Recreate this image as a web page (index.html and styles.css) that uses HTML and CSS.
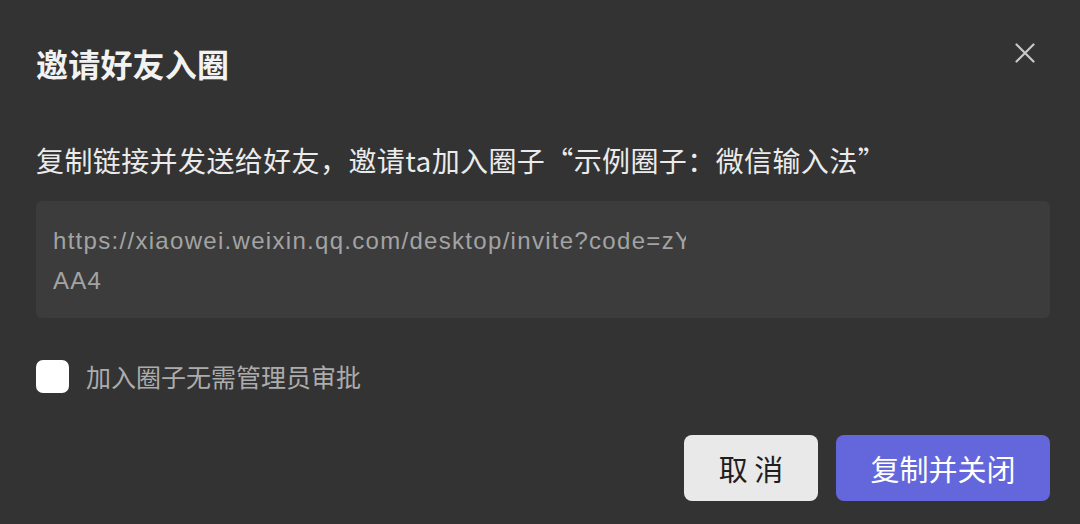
FILE: index.html
```html
<!DOCTYPE html>
<html lang="zh-CN">
<head>
<meta charset="utf-8">
<title>邀请好友入圈</title>
<link rel="stylesheet" href="styles.css">
</head>
<body>
<div class="dialog">
  <div class="header">
    <h1 class="title">邀请好友入圈</h1>
    <button class="close" aria-label="关闭">
      <svg width="20" height="20" viewBox="0 0 20 20"><path d="M1.5 1.5 L18.5 18.5 M18.5 1.5 L1.5 18.5" stroke="#c8c8c8" stroke-width="2.2" stroke-linecap="round" fill="none"/></svg>
    </button>
  </div>
  <p class="desc">复制链接并发送给好友，邀请ta加入圈子“示例圈子：微信输入法”</p>
  <div class="linkbox">
    <div class="line"><span class="clip">https://xiaowei.weixin.qq.com/desktop/invite?code=zY</span></div>
    <div class="line">AA4</div>
  </div>
  <label class="check-row">
    <span class="checkbox"></span>
    <span class="check-label">加入圈子无需管理员审批</span>
  </label>
  <div class="actions">
    <button class="btn btn-cancel">取 消</button>
    <button class="btn btn-primary">复制并关闭</button>
  </div>
</div>
</body>
</html>
```

FILE: styles.css
```css
* { box-sizing: border-box; }
html, body {
  margin: 0;
  padding: 0;
  background: #333333;
  width: 1080px;
  height: 524px;
  overflow: hidden;
}
body {
  font-family: "Noto Sans CJK SC", "Noto Sans", sans-serif;
}
.dialog {
  padding: 40px 30px 0 36px;
  display: flex;
  flex-direction: column;
}
.header {
  display: flex;
  justify-content: space-between;
  align-items: flex-start;
  height: 46px;
}
.title {
  margin: 0;
  font-size: 32px;
  line-height: 46px;
  font-weight: 700;
  color: #f2f2f2;
  letter-spacing: 0.2px;
}
.close {
  background: none;
  border: none;
  padding: 0;
  margin: 3px 15px 0 0;
  width: 20px;
  height: 20px;
  display: flex;
  cursor: pointer;
}
.desc {
  margin: 54px 0 0 0;
  font-size: 28px;
  line-height: 40px;
  color: #ebebeb;
  letter-spacing: 0.4px;
}
.linkbox {
  margin-top: 21px;
  background: #3c3c3c;
  border-radius: 6px;
  padding: 20px 17px 17px 17px;
  font-family: "Liberation Sans", "Noto Sans", sans-serif;
  font-size: 24px;
  line-height: 40px;
  color: #a3a3a3;
  letter-spacing: 1.3px;
}
.line {
  height: 40px;
  white-space: nowrap;
}
.clip {
  display: inline-block;
  max-width: 633px;
  overflow: hidden;
  vertical-align: top;
}
.check-row {
  margin-top: 42px;
  display: flex;
  align-items: center;
  gap: 17px;
  height: 33px;
}
.checkbox {
  width: 33px;
  height: 33px;
  background: #ffffff;
  border-radius: 7px;
  flex: none;
}
.check-label {
  font-size: 25px;
  line-height: 33px;
  color: #acacac;
}
.actions {
  margin-top: 42px;
  display: flex;
  justify-content: flex-end;
  gap: 18px;
}
.btn {
  height: 66px;
  border: none;
  border-radius: 8px;
  font-family: "Noto Sans CJK SC", "Noto Sans", sans-serif;
  font-size: 29px;
  padding: 0;
  cursor: pointer;
}
.btn-cancel {
  width: 134px;
  background: #e9e9e9;
  color: #1f1f1f;
}
.btn-primary {
  width: 214px;
  background: #6467db;
  color: #ffffff;
}
```
